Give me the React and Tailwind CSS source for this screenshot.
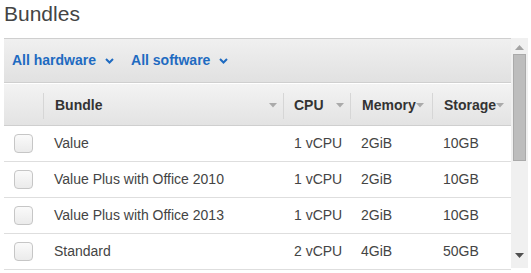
import React from 'react';

const bundles = [
  { name: 'Value', cpu: '1 vCPU', memory: '2GiB', storage: '10GB' },
  { name: 'Value Plus with Office 2010', cpu: '1 vCPU', memory: '2GiB', storage: '10GB' },
  { name: 'Value Plus with Office 2013', cpu: '1 vCPU', memory: '2GiB', storage: '10GB' },
  { name: 'Standard', cpu: '2 vCPU', memory: '4GiB', storage: '50GB' },
];

const Caret = () => (
  <svg width="9" height="6" viewBox="0 0 9 6" className="ml-[9px] mt-[1px]">
    <path d="M1 1 L4.5 4.5 L8 1" fill="none" stroke="#1f6bc1" strokeWidth="2" />
  </svg>
);

const SortArrow = () => (
  <svg width="8" height="5" viewBox="0 0 8 5">
    <path d="M0 0 H8 L4 4.5 Z" fill="#aaa" />
  </svg>
);

const Checkbox = () => (
  <div className="w-[19px] h-[19px] rounded-[4px] border border-[#c6c6c6] bg-gradient-to-b from-[#fafafa] to-[#ebebeb]" />
);

const App = () => {
  return (
    <div className="w-[531px] h-[273px] bg-white overflow-hidden font-['Liberation_Sans',Arial,sans-serif]">
      <h1 className="pl-[4px] pt-[1px] h-[38px] text-[21px] leading-[26px] text-[#444]">Bundles</h1>

      <div className="flex ml-[4px] w-[524px]">
        <div className="flex-1">
          {/* toolbar */}
          <div className="h-[45px] border-t border-b border-[#cfcfcf] bg-gradient-to-b from-[#f0f0f0] to-[#e1e1e1] flex items-center pl-[8px] text-[14px] font-bold text-[#1f6bc1]">
            <span className="flex items-center">All hardware<Caret /></span>
            <span className="flex items-center ml-[17px]">All software<Caret /></span>
          </div>

          {/* header */}
          <div className="mt-[1px] h-[42px] pt-[2px] border-b border-[#cfcfcf] bg-gradient-to-b from-[#f3f3f3] to-[#e3e3e3] flex items-center text-[14px] font-bold text-[#333]">
            <div className="w-[40px] h-[26px] border-r border-[#d6d6d6]" />
            <div className="w-[240px] h-[26px] flex items-center justify-between pl-[11px] pr-[6px] border-r border-[#d6d6d6]">
              <span>Bundle</span>
              <SortArrow />
            </div>
            <div className="w-[67px] h-[26px] flex items-center justify-between pl-[10px] pr-[6px] border-r border-[#d6d6d6]">
              <span>CPU</span>
              <SortArrow />
            </div>
            <div className="w-[82px] h-[26px] flex items-center pl-[11px] border-r border-[#d6d6d6]">
              <span>Memory</span>
              <SortArrow />
            </div>
            <div className="flex-1 h-[26px] flex items-center pl-[11px]">
              <span>Storage</span>
              <SortArrow />
            </div>
          </div>

          {/* rows */}
          {bundles.map((b) => (
            <div key={b.name} className="h-[36px] border-b border-[#dedede] flex items-center text-[14px] text-[#444]">
              <div className="w-[41px] pl-[10px] flex items-center">
                <Checkbox />
              </div>
              <div className="w-[249px] pl-[9px]">{b.name}</div>
              <div className="w-[67px]">{b.cpu}</div>
              <div className="w-[82px]">{b.memory}</div>
              <div className="flex-1">{b.storage}</div>
            </div>
          ))}
        </div>

        {/* scrollbar */}
        <div className="w-[17px] h-[230px] bg-[#f0f0f0] flex flex-col items-center">
          <svg width="9" height="5" viewBox="0 0 9 5" className="mt-[7px]">
            <path d="M0 5 H9 L4.5 0 Z" fill="#a3a3a3" />
          </svg>
          <div className="mt-[4px] w-[13px] h-[107px] bg-[#bdbdbd] border border-[#aaa]" />
          <div className="flex-1" />
          <svg width="9" height="5" viewBox="0 0 9 5" className="mb-[10px]">
            <path d="M0 0 H9 L4.5 5 Z" fill="#505050" />
          </svg>
        </div>
      </div>
    </div>
  );
};

export default App;
